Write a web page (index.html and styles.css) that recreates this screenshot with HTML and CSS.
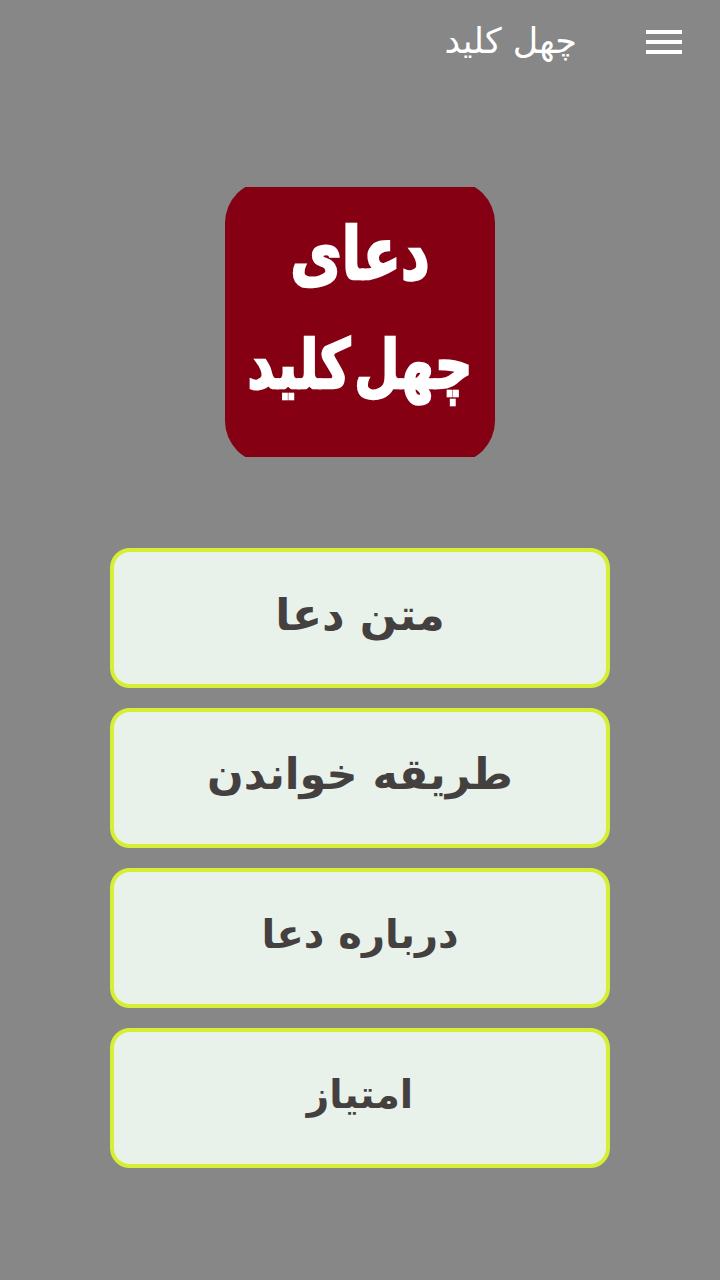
FILE: index.html
```
<!DOCTYPE html>
<html lang="fa" dir="rtl">
<head>
<meta charset="utf-8">
<title>چهل کلید</title>
<link rel="stylesheet" href="styles.css">
</head>
<body>
<header class="bar">
  <div class="burger"><span></span><span></span><span></span></div>
  <div class="title">چهل کلید</div>
</header>
<main class="page">
  <div class="logo">
    <div class="logo-art">
      <div class="l1">دعای</div>
      <div class="l2">چهل کلید</div>
    </div>
  </div>
  <nav class="menu">
    <a class="btn">متن دعا</a>
    <a class="btn btn-b">طریقه خواندن</a>
    <a class="btn btn-c">درباره دعا</a>
    <a class="btn btn-d">امتیاز</a>
  </nav>
</main>
</body>
</html>
```
FILE: styles.css
```
* { box-sizing: border-box; }
html, body { margin: 0; height: 100%; }
body { background: #878787; font-family: "DejaVu Sans", "Noto Sans", sans-serif; width: 720px; height: 1280px; overflow: hidden; }
.bar { height: 84px; display: flex; align-items: flex-start; direction: rtl; padding: 30px 38px 0 0; }
.burger { width: 36px; height: 24px; display: flex; flex-direction: column; justify-content: space-between; }
.burger span { display: block; height: 4px; background: #fff; }
.title { margin-right: 69px; margin-top: -9px; color: #fff; font-size: 35px; line-height: 40px; }
.page { display: flex; flex-direction: column; align-items: center; }
.logo { margin-top: 103px; width: 270px; height: 270px; overflow: hidden; }
.logo-art { margin-top: -6px; width: 270px; height: 282px; background: #840012; border-radius: 42px; color: #fff; display: flex; flex-direction: column; align-items: center; font-weight: 700; }
.l1 { font-size: 56px; line-height: 70px; margin-top: 38px; transform: scale(1, 1.3); -webkit-text-stroke: 2px #fff; }
.l2 { font-size: 52px; line-height: 70px; margin-top: 41px; white-space: nowrap; word-spacing: -14px; transform: scale(1, 1.3); -webkit-text-stroke: 2px #fff; }
.menu { margin-top: 91px; display: flex; flex-direction: column; gap: 20px; }
.btn { width: 500px; height: 140px; border: 4px solid #d6ee35; border-radius: 20px; background: #e8f2ea; color: #444040; font-size: 44px; font-weight: 700; display: flex; align-items: center; justify-content: center; padding-bottom: 8px; }
.btn-b { font-size: 43px; }
.btn-c { font-size: 40px; }
.btn-d { font-size: 39px; }
```
